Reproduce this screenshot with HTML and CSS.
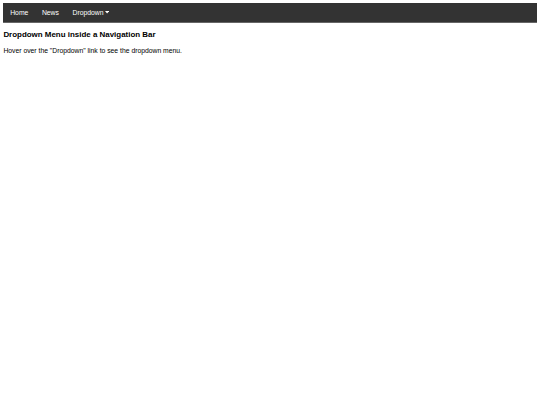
FILE: index.html
```html
<!DOCTYPE html>
<html>
<head>
<meta charset="utf-8">
<link rel="stylesheet" href="styles.css">
</head>
<body>
<div class="navbar">
  <a href="#home">Home</a>
  <a href="#news">News</a>
  <div class="dropdown">
    <button class="dropbtn">Dropdown <svg class="caret" viewBox="0 0 10 6" width="4.2" height="2.6"><path d="M0 0H10L5 6Z" fill="#fff"/></svg></button>
  </div>
</div>
<h3 class="title">Dropdown Menu inside a Navigation Bar</h3>
<p class="text">Hover over the "Dropdown" link to see the dropdown menu.</p>
</body>
</html>
```
FILE: styles.css
```css
body {
  margin: 3.4px;
  font-family: "Liberation Sans", Arial, sans-serif;
  background: #fff;
  color: #000;
}
.navbar {
  display: flex;
  background-color: #333;
  font-family: "Liberation Sans", Arial, sans-serif;
  outline: 0.6px solid #666;
}
.navbar a, .dropbtn {
  font-size: 6.8px;
  color: #fff;
  text-align: center;
  padding: 5.9px 6.8px;
  text-decoration: none;
  line-height: normal;
}
.dropbtn {
  border: none;
  outline: none;
  background: inherit;
  font-family: inherit;
  margin: 0;
  display: flex;
  align-items: center;
  gap: 1.7px;
}
.caret {
  display: block;
}
.title {
  font-size: 7.95px;
  margin: 7.95px 0;
}
.text {
  font-size: 6.8px;
  margin: 6.8px 0;
}
```
